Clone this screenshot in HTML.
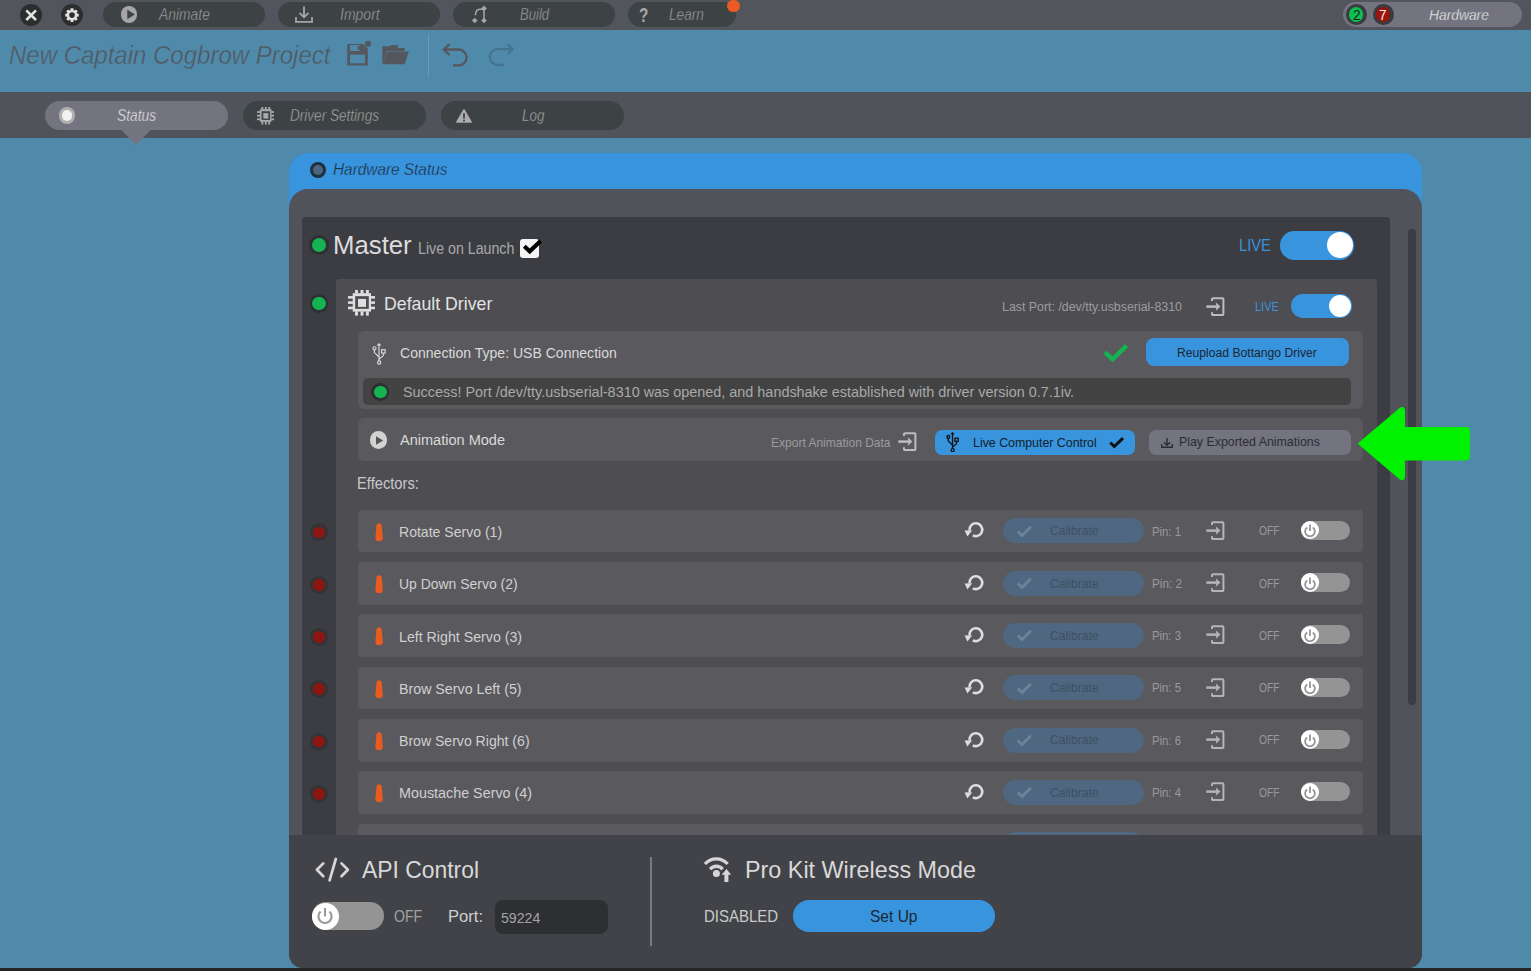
<!DOCTYPE html>
<html><head><meta charset="utf-8"><style>
html,body{margin:0;padding:0}
body{width:1531px;height:971px;overflow:hidden;position:relative;background:#508AAA;font-family:"Liberation Sans",sans-serif}
body>div,body>span{position:absolute}
.t{white-space:nowrap;transform-origin:0 0}
</style></head><body>
<div style="left:0px;top:0px;width:1531px;height:30px;background:#52565C;border-radius:0px;"></div>
<div style="left:20px;top:3.5px;width:22px;height:22px;background:#2C2D2F;border-radius:50%;"></div>
<svg style="position:absolute;left:20px;top:3.5px" width="22" height="22" viewBox="0 0 22 22"><path d="M6.3 6.3 L16 16 M16 6.3 L6.3 16" stroke="#E2E2E2" stroke-width="2.6" stroke-linecap="butt"/></svg>
<div style="left:61.3px;top:3.5px;width:22px;height:22px;background:#2C2D2F;border-radius:50%;"></div>
<svg style="position:absolute;left:61.3px;top:3.5px" width="22" height="22" viewBox="0 0 22 22"><path d="M15.94 9.49 L17.78 9.80 L17.78 12.40 L15.94 12.71 L15.64 13.46 L16.71 14.98 L14.88 16.81 L13.36 15.74 L12.61 16.04 L12.30 17.88 L9.70 17.88 L9.39 16.04 L8.64 15.74 L7.12 16.81 L5.29 14.98 L6.36 13.46 L6.06 12.71 L4.22 12.40 L4.22 9.80 L6.06 9.49 L6.36 8.74 L5.29 7.22 L7.12 5.39 L8.64 6.46 L9.39 6.16 L9.70 4.32 L12.30 4.32 L12.61 6.16 L13.36 6.46 L14.88 5.39 L16.71 7.22 L15.64 8.74Z" fill="#E2E2E2"/><circle cx="11" cy="11.1" r="2.8" fill="#2C2D2F"/></svg>
<div style="left:103px;top:2px;width:162px;height:25px;background:#3D4245;border-radius:12.5px;"></div>
<div style="left:120.8px;top:6.199999999999999px;width:16.6px;height:16.6px;background:#A6A6A6;border-radius:50%;"></div>
<svg style="position:absolute;left:121px;top:6px" width="17" height="17" viewBox="0 0 17 17"><path d="M6.3 3.6 L13.8 8.5 L6.3 13.3 Z" fill="#3D4245"/></svg>
<span class="t" style="transform:scaleX(0.8722);left:158.97px;top:7.00px;font-size:15.92px;line-height:15.92px;color:#9E9E9E;font-style:italic;-webkit-text-stroke:0.35px #3D4245;">Animate</span>
<div style="left:278px;top:2px;width:162px;height:25px;background:#3D4245;border-radius:12.5px;"></div>
<svg style="position:absolute;left:294px;top:4px" width="20" height="20" viewBox="0 0 20 20"><path d="M10 2.5 V13 M5.5 8.8 L10 13.2 L14.5 8.8" stroke="#A6A6A6" stroke-width="1.8" fill="none"/><path d="M2 13 V17.8 H18 V13" stroke="#A6A6A6" stroke-width="1.8" fill="none"/></svg>
<span class="t" style="transform:scaleX(0.8804);left:339.50px;top:7.00px;font-size:15.92px;line-height:15.92px;color:#9E9E9E;font-style:italic;-webkit-text-stroke:0.35px #3D4245;">Import</span>
<div style="left:453px;top:2px;width:162px;height:25px;background:#3D4245;border-radius:12.5px;"></div>
<svg style="position:absolute;left:470px;top:4px" width="20" height="20" viewBox="0 0 20 20"><path d="M14 5 V17" stroke="#A6A6A6" stroke-width="1.5" fill="none"/><path d="M14 5.3 H9.5 Q5.6 5.6 5.4 11.2" stroke="#A6A6A6" stroke-width="1.5" fill="none"/><path d="M14 1.6 L16.8 4.4 L14 7.2 L11.2 4.4Z" fill="#A6A6A6"/><path d="M14 13.7 L16.8 16.5 L14 19.3 L11.2 16.5Z" fill="#A6A6A6"/><path d="M4.7 13.7 L7.5 16.5 L4.7 19.3 L1.9 16.5Z" fill="#A6A6A6"/></svg>
<span class="t" style="transform:scaleX(0.8214);left:519.50px;top:7.00px;font-size:15.92px;line-height:15.92px;color:#9E9E9E;font-style:italic;-webkit-text-stroke:0.35px #3D4245;">Build</span>
<div style="left:628px;top:2px;width:108px;height:25px;background:#3D4245;border-radius:12.5px;"></div>
<span class="t" style="transform:scaleX(0.7417);left:638.90px;top:5.00px;font-size:20.64px;line-height:20.64px;color:#A6A6A6;font-weight:bold;">?</span>
<span class="t" style="transform:scaleX(0.8571);left:668.50px;top:7.00px;font-size:15.92px;line-height:15.92px;color:#9E9E9E;font-style:italic;-webkit-text-stroke:0.35px #3D4245;">Learn</span>
<div style="left:727.3px;top:-0.40000000000000036px;width:12.4px;height:12.4px;background:#EE5A24;border-radius:50%;"></div>
<div style="left:1342.5px;top:2px;width:179.5px;height:25px;background:#737480;border-radius:12.5px;"></div>
<div style="left:1345.5px;top:4.1px;width:21.0px;height:21.0px;background:#3A3B3E;border-radius:50%;"></div>
<div style="left:1348.6px;top:7.199999999999999px;width:14.8px;height:14.8px;background:#0EBE50;border-radius:50%;"></div>
<span class="t" style="transform:scaleX(0.9375);left:1352.50px;top:8.00px;font-size:14.68px;line-height:14.68px;color:#1A2A20;">2</span>
<div style="left:1372.5px;top:4.1px;width:21.0px;height:21.0px;background:#3A3B3E;border-radius:50%;"></div>
<div style="left:1375.6px;top:7.199999999999999px;width:14.8px;height:14.8px;background:#9E140B;border-radius:50%;"></div>
<span class="t" style="transform:scaleX(0.9250);left:1379.30px;top:8.00px;font-size:14.68px;line-height:14.68px;color:#EEEEEE;">7</span>
<span class="t" style="transform:scaleX(0.8970);left:1429.40px;top:7.00px;font-size:15.41px;line-height:15.41px;color:#EDEDED;font-style:italic;-webkit-text-stroke:0.3px #737480;">Hardware</span>
<span class="t" style="transform:scaleX(0.9279);left:9.40px;top:43.00px;font-size:25.87px;line-height:25.87px;color:#50575F;font-style:italic;-webkit-text-stroke:0.45px #508AAA;">New Captain Cogbrow Project</span>
<svg style="position:absolute;left:346px;top:40px" width="26" height="28" viewBox="0 0 26 28"><path d="M1.3 4 H17.5 L21.8 8.3 V25.6 H1.3 Z" fill="#54585E"/><rect x="4" y="5" width="10" height="6" fill="#508AAA"/><rect x="11.6" y="5.8" width="2.3" height="4.2" fill="#54585E"/><rect x="4" y="14.6" width="15" height="8.7" fill="#508AAA"/><circle cx="22" cy="3.8" r="3" fill="#54585E"/></svg>
<svg style="position:absolute;left:380px;top:42px" width="32" height="26" viewBox="0 0 32 26"><path d="M2.3 4.3 H10 L11 3 H17.7 V6 H24.7 V9 H7 L3 22 H2.3 Z" fill="#54585E"/><path d="M7.2 9.5 H28.8 L24.7 22.2 H3 Z" fill="#54585E"/></svg>
<div style="left:427.5px;top:34px;width:1.5px;height:42px;background:#6B9BB7;border-radius:0px;"></div>
<svg style="position:absolute;left:440px;top:40px" width="32" height="30" viewBox="0 0 32 30"><path d="M13 25.4 H18.5 A8 7.9 0 0 0 18.5 9.5 H4" stroke="#54585E" stroke-width="2.3" fill="none"/><path d="M9.5 4.2 L3.8 9.5 L9.5 15" stroke="#54585E" stroke-width="2.3" fill="none"/></svg>
<svg style="position:absolute;left:486px;top:40px" width="32" height="30" viewBox="0 0 32 30"><path d="M17.8 25 H11.8 A7.9 7.9 0 0 1 11.8 9.2 H26.2" stroke="#45748F" stroke-width="2.3" fill="none"/><path d="M21.8 4.4 L26.7 9.2 L21.8 14" stroke="#45748F" stroke-width="2.3" fill="none"/></svg>
<div style="left:0px;top:92px;width:1531px;height:46px;background:#505359;border-radius:0px;"></div>
<div style="left:45px;top:101px;width:183px;height:29px;background:#737480;border-radius:14.5px;"></div>
<svg style="position:absolute;left:118px;top:129px" width="36" height="17" viewBox="0 0 36 17"><path d="M2.5 0 H33.5 L18 16 Z" fill="#737480"/></svg>
<div style="left:58.89999999999999px;top:107.3px;width:16.4px;height:16.4px;background:#B0B0B0;border-radius:50%;"></div>
<div style="left:61.8px;top:110.2px;width:10.6px;height:10.6px;background:#F2F2F2;border-radius:50%;"></div>
<span class="t" style="transform:scaleX(0.8719);left:116.50px;top:108.00px;font-size:15.84px;line-height:15.84px;color:#EAEAEA;font-style:italic;-webkit-text-stroke:0.35px #737480;">Status</span>
<div style="left:243px;top:101px;width:183px;height:29px;background:#3D4245;border-radius:14.5px;"></div>
<svg style="position:absolute;left:257px;top:107.2px" width="17" height="17.7" viewBox="0 0 27 26" preserveAspectRatio="none"><rect x="4.7" y="3.2" width="18.3" height="18.6" fill="#ABABAB"/><rect x="7.2" y="6.2" width="13.6" height="12.8" fill="#3D4245"/><rect x="10" y="9" width="8" height="8" fill="#ABABAB"/><rect x="7.05" y="0" width="2.9" height="3.5" fill="#ABABAB"/><rect x="7.05" y="21.5" width="2.9" height="4.3" fill="#ABABAB"/><rect x="12.55" y="0" width="2.9" height="3.5" fill="#ABABAB"/><rect x="12.55" y="21.5" width="2.9" height="4.3" fill="#ABABAB"/><rect x="17.95" y="0" width="2.9" height="3.5" fill="#ABABAB"/><rect x="17.95" y="21.5" width="2.9" height="4.3" fill="#ABABAB"/><rect x="0" y="6.1000000000000005" width="5" height="2.6" fill="#ABABAB"/><rect x="22.7" y="6.1000000000000005" width="4.5" height="2.6" fill="#ABABAB"/><rect x="0" y="11.399999999999999" width="5" height="2.6" fill="#ABABAB"/><rect x="22.7" y="11.399999999999999" width="4.5" height="2.6" fill="#ABABAB"/><rect x="0" y="16.8" width="5" height="2.6" fill="#ABABAB"/><rect x="22.7" y="16.8" width="4.5" height="2.6" fill="#ABABAB"/></svg>
<span class="t" style="transform:scaleX(0.8648);left:289.90px;top:108.00px;font-size:15.70px;line-height:15.70px;color:#A6A6A6;font-style:italic;-webkit-text-stroke:0.35px #3D4245;">Driver Settings</span>
<div style="left:441px;top:101px;width:183px;height:29px;background:#3D4245;border-radius:14.5px;"></div>
<svg style="position:absolute;left:455px;top:107.5px" width="18" height="16" viewBox="0 0 18 16"><path d="M9 1.2 Q9.6 1.2 10 1.9 L16.8 13.8 Q17.1 14.8 16.2 14.8 H1.8 Q0.9 14.8 1.2 13.8 L8 1.9 Q8.4 1.2 9 1.2Z" fill="#ABABAB"/><rect x="8.1" y="5.3" width="1.8" height="5.2" fill="#3D4245"/><rect x="8.1" y="11.6" width="1.8" height="1.8" fill="#3D4245"/></svg>
<span class="t" style="transform:scaleX(0.8545);left:521.50px;top:108.00px;font-size:15.70px;line-height:15.70px;color:#A6A6A6;font-style:italic;-webkit-text-stroke:0.35px #3D4245;">Log</span>
<div style="left:289px;top:153px;width:1133px;height:107px;background:#3894DD;border-radius:20px 20px 0 0;"></div>
<div style="left:289px;top:189px;width:1133px;height:779px;background:#505359;border-radius:19px 19px 14px 14px;"></div>
<div style="left:310px;top:162.1px;width:16px;height:16px;background:#1F2F3E;border-radius:50%;"></div>
<div style="left:312.6px;top:164.7px;width:10.8px;height:10.8px;background:#4C6681;border-radius:50%;"></div>
<span class="t" style="transform:scaleX(0.9196);left:332.90px;top:162.00px;font-size:16.72px;line-height:16.72px;color:#1F3245;font-style:italic;-webkit-text-stroke:0.3px #3894DD;">Hardware Status</span>
<div style="left:302px;top:217px;width:1088px;height:683px;background:#3C3D42;border-radius:3px;"></div>
<div style="left:309px;top:234.8px;width:20px;height:20px;background:#2E2F33;border-radius:50%;"></div>
<div style="left:311.7px;top:237.5px;width:14.6px;height:14.6px;background:#14B452;border-radius:50%;"></div>
<span class="t" style="transform:scaleX(0.9843);left:332.53px;top:232.00px;font-size:26.16px;line-height:26.16px;color:#DCDCDC;">Master</span>
<span class="t" style="transform:scaleX(0.8889);left:417.91px;top:241.00px;font-size:15.99px;line-height:15.99px;color:#A9A9A9;">Live on Launch</span>
<div style="left:520.1px;top:239px;width:18.5px;height:19.100000000000023px;background:#F4F4F4;border-radius:3px;"></div>
<svg style="position:absolute;left:518px;top:236px" width="26" height="20" viewBox="0 0 26 20"><path d="M6.3 10.2 L11.7 15.3 L22.6 4.9" stroke="#000" stroke-width="4.1" fill="none" stroke-linejoin="miter"/></svg>
<span class="t" style="transform:scaleX(0.8724);left:1239.03px;top:238.00px;font-size:16.86px;line-height:16.86px;color:#3894DD;">LIVE</span>
<div style="left:1280px;top:231px;width:74px;height:28.5px;background:#3894DD;border-radius:14.25px;"></div>
<div style="left:1327px;top:232.3px;width:26px;height:26px;background:#FFFFFF;border-radius:50%;"></div>
<div style="left:335.7px;top:279px;width:1041.3px;height:621px;background:#4E4D52;border-radius:4px;"></div>
<div style="left:309.7px;top:294.2px;width:18.6px;height:18.6px;background:#2E2F33;border-radius:50%;"></div>
<div style="left:312.4px;top:296.9px;width:13.2px;height:13.2px;background:#14B452;border-radius:50%;"></div>
<svg style="position:absolute;left:348.1px;top:289.9px" width="27" height="25.8" viewBox="0 0 27 26" preserveAspectRatio="none"><rect x="4.7" y="3.2" width="18.3" height="18.6" fill="#DEDEDE"/><rect x="7.2" y="6.2" width="13.6" height="12.8" fill="#4E4D52"/><rect x="10" y="9" width="8" height="8" fill="#DEDEDE"/><rect x="7.05" y="0" width="2.9" height="3.5" fill="#DEDEDE"/><rect x="7.05" y="21.5" width="2.9" height="4.3" fill="#DEDEDE"/><rect x="12.55" y="0" width="2.9" height="3.5" fill="#DEDEDE"/><rect x="12.55" y="21.5" width="2.9" height="4.3" fill="#DEDEDE"/><rect x="17.95" y="0" width="2.9" height="3.5" fill="#DEDEDE"/><rect x="17.95" y="21.5" width="2.9" height="4.3" fill="#DEDEDE"/><rect x="0" y="6.1000000000000005" width="5" height="2.6" fill="#DEDEDE"/><rect x="22.7" y="6.1000000000000005" width="4.5" height="2.6" fill="#DEDEDE"/><rect x="0" y="11.399999999999999" width="5" height="2.6" fill="#DEDEDE"/><rect x="22.7" y="11.399999999999999" width="4.5" height="2.6" fill="#DEDEDE"/><rect x="0" y="16.8" width="5" height="2.6" fill="#DEDEDE"/><rect x="22.7" y="16.8" width="4.5" height="2.6" fill="#DEDEDE"/></svg>
<span class="t" style="transform:scaleX(0.9760);left:384.32px;top:295.00px;font-size:18.17px;line-height:18.17px;color:#E2E2E2;">Default Driver</span>
<span class="t" style="transform:scaleX(0.9059);left:1001.69px;top:300.00px;font-size:13.66px;line-height:13.66px;color:#9C9C9C;">Last Port: /dev/tty.usbserial-8310</span>
<svg style="position:absolute;left:1205.5px;top:297px" width="19.0" height="19.0" viewBox="0 0 19 19"><path d="M6 4.1 V2.3 Q6 1.3 7 1.3 H16.4 Q17.4 1.3 17.4 2.3 V17.1 Q17.4 18.1 16.4 18.1 H7 Q6 18.1 6 17.1 V15.2" stroke="#BDBDBD" stroke-width="2" fill="none"/><path d="M0.3 9.6 H11.5" stroke="#BDBDBD" stroke-width="2.5" fill="none"/><path d="M14.4 9.6 L9.7 5.3 L10.6 9.6 L9.7 13.9 Z" fill="#BDBDBD"/></svg>
<span class="t" style="transform:scaleX(0.8199);left:1255.18px;top:300.00px;font-size:13.37px;line-height:13.37px;color:#3894DD;">LIVE</span>
<div style="left:1291px;top:294.2px;width:61px;height:23.600000000000023px;background:#3894DD;border-radius:11.8px;"></div>
<div style="left:1328.7px;top:294.7px;width:22.6px;height:22.6px;background:#FFFFFF;border-radius:50%;"></div>
<div style="left:357.5px;top:331.3px;width:1005.5px;height:77.69999999999999px;background:#5A595E;border-radius:6px;"></div>
<svg style="position:absolute;left:371.5px;top:342.5px" width="14.0" height="22.0" viewBox="0 0 14 22"><g stroke="#DADADA" stroke-width="1.15" fill="none"><path d="M7 1.5 V17.8"/><path d="M2.4 6.9 V9.6 L7 14"/><path d="M11.3 10.2 V12.6 L7 16.2"/><circle cx="2.5" cy="5.3" r="1.55"/><rect x="9.6" y="6.7" width="3.5" height="3.4"/><circle cx="7.2" cy="19.5" r="1.6"/></g><path d="M7 0 L9.4 2.4 H4.6Z" fill="#DADADA"/></svg>
<span class="t" style="transform:scaleX(0.9471);left:399.70px;top:346.00px;font-size:14.83px;line-height:14.83px;color:#D9D9D9;">Connection Type: USB Connection</span>
<svg style="position:absolute;left:1101px;top:341px" width="30" height="24" viewBox="0 0 30 24"><path d="M4 11.3 L11.5 18.3 L25.6 4.6" stroke="#14B452" stroke-width="4.4" fill="none"/></svg>
<div style="left:1146px;top:337.6px;width:203px;height:28.599999999999966px;background:#3894DD;border-radius:8px;"></div>
<span class="t" style="transform:scaleX(0.9292);left:1176.57px;top:346.00px;font-size:13.08px;line-height:13.08px;color:#1C2733;">Reupload Bottango Driver</span>
<div style="left:363.4px;top:378px;width:987.6px;height:27px;background:#434344;border-radius:5px;"></div>
<div style="left:371.3px;top:383.2px;width:18px;height:18px;background:#2E2F33;border-radius:50%;"></div>
<div style="left:374.0px;top:385.9px;width:12.6px;height:12.6px;background:#14B452;border-radius:50%;"></div>
<span class="t" style="transform:scaleX(0.9712);left:403.00px;top:385.00px;font-size:14.83px;line-height:14.83px;color:#A9A9A9;">Success! Port /dev/tty.usbserial-8310 was opened, and handshake established with driver version 0.7.1iv.</span>
<div style="left:357.5px;top:418.3px;width:1005.5px;height:42.69999999999999px;background:#5A595E;border-radius:6px;"></div>
<div style="left:369.7px;top:431.3px;width:17.4px;height:17.4px;background:#D2D2D2;border-radius:50%;"></div>
<svg style="position:absolute;left:370px;top:431.5px" width="17" height="17" viewBox="0 0 17 17"><path d="M6 4.2 L13.2 8.5 L6 12.8 Z" fill="#55565B"/></svg>
<span class="t" style="transform:scaleX(0.9803);left:399.70px;top:433.00px;font-size:14.83px;line-height:14.83px;color:#D9D9D9;">Animation Mode</span>
<span class="t" style="transform:scaleX(0.9400);left:770.56px;top:437.00px;font-size:12.79px;line-height:12.79px;color:#9C9C9C;">Export Animation Data</span>
<svg style="position:absolute;left:897.8px;top:432px" width="19.0" height="19.0" viewBox="0 0 19 19"><path d="M6 4.1 V2.3 Q6 1.3 7 1.3 H16.4 Q17.4 1.3 17.4 2.3 V17.1 Q17.4 18.1 16.4 18.1 H7 Q6 18.1 6 17.1 V15.2" stroke="#BDBDBD" stroke-width="2" fill="none"/><path d="M0.3 9.6 H11.5" stroke="#BDBDBD" stroke-width="2.5" fill="none"/><path d="M14.4 9.6 L9.7 5.3 L10.6 9.6 L9.7 13.9 Z" fill="#BDBDBD"/></svg>
<div style="left:934.5px;top:429.7px;width:200.79999999999995px;height:25.30000000000001px;background:#3894DD;border-radius:7px;"></div>
<svg style="position:absolute;left:946px;top:432px" width="13.02" height="20.46" viewBox="0 0 14 22"><g stroke="#111111" stroke-width="1.4" fill="none"><path d="M7 1.5 V17.8"/><path d="M2.4 6.9 V9.6 L7 14"/><path d="M11.3 10.2 V12.6 L7 16.2"/><circle cx="2.5" cy="5.3" r="1.55"/><rect x="9.6" y="6.7" width="3.5" height="3.4"/><circle cx="7.2" cy="19.5" r="1.6"/></g><path d="M7 0 L9.4 2.4 H4.6Z" fill="#111111"/></svg>
<span class="t" style="transform:scaleX(0.9057);left:972.99px;top:436.00px;font-size:13.66px;line-height:13.66px;color:#14202C;">Live Computer Control</span>
<svg style="position:absolute;left:1108px;top:436px" width="18" height="14" viewBox="0 0 18 14"><path d="M2.3 6.5 L6.3 10.5 L15 2.2" stroke="#111" stroke-width="3" fill="none"/></svg>
<div style="left:1148.8px;top:430px;width:202.0px;height:25px;background:#737480;border-radius:7px;"></div>
<svg style="position:absolute;left:1160px;top:437px" width="14" height="12" viewBox="0 0 14 12"><path d="M7 1 V8.3 M4 5.3 L7 8.3 L10 5.3" stroke="#2A2B30" stroke-width="1.4" fill="none"/><path d="M1.7 7 V10.3 H12.3 V7" stroke="#2A2B30" stroke-width="1.4" fill="none"/></svg>
<span class="t" style="transform:scaleX(0.9552);left:1178.94px;top:436.00px;font-size:12.94px;line-height:12.94px;color:#2C2D33;">Play Exported Animations</span>
<span class="t" style="transform:scaleX(0.9200);left:357.48px;top:476.00px;font-size:15.99px;line-height:15.99px;color:#C9C9C9;">Effectors:</span>
<div style="left:357.5px;top:509.8px;width:1005.5px;height:42.69999999999999px;background:#5A595E;border-radius:4px;"></div>
<div style="left:310.3px;top:523.4px;width:18px;height:18px;background:#333438;border-radius:50%;"></div>
<div style="left:313.40000000000003px;top:526.5px;width:11.8px;height:11.8px;background:#8E1610;border-radius:50%;"></div>
<svg style="position:absolute;left:373.5px;top:521.8px" width="11" height="20" viewBox="0 0 11 20"><path d="M5.1 1.2 Q7.6 1.2 7.8 4 L8.4 11.5 Q8.8 13.8 8.8 16 Q8.8 19.2 5.1 19.2 Q1.4 19.2 1.4 16 Q1.4 13.8 1.8 11.5 L2.4 4 Q2.6 1.2 5.1 1.2Z" fill="#E95C20"/></svg>
<span class="t" style="transform:scaleX(0.9036);left:398.60px;top:524.00px;font-size:15.55px;line-height:15.55px;color:#D0D0D0;">Rotate Servo (1)</span>
<svg style="position:absolute;left:963px;top:520.3px" width="22" height="20" viewBox="0 0 22 20"><path d="M6.5 10.3 A6.4 6.4 0 1 1 9.8 15.3" stroke="#DDDDDD" stroke-width="2.6" fill="none"/><path d="M1.6 10.6 L9.2 10.2 L4.4 16.4Z" fill="#DDDDDD"/></svg>
<div style="left:1003.2px;top:518.3px;width:140.79999999999995px;height:25.100000000000023px;background:#4F6780;border-radius:12.5px;"></div>
<svg style="position:absolute;left:1015px;top:523.8px" width="20" height="15" viewBox="0 0 20 15"><path d="M2.8 7.5 L7 11.6 L15.8 2.8" stroke="#6E8398" stroke-width="2.8" fill="none"/></svg>
<span class="t" style="transform:scaleX(0.9089);left:1049.80px;top:524.00px;font-size:13.37px;line-height:13.37px;color:#3F5165;">Calibrate</span>
<span class="t" style="transform:scaleX(0.9061);left:1151.99px;top:526.00px;font-size:12.50px;line-height:12.50px;color:#9A9A9A;">Pin: 1</span>
<svg style="position:absolute;left:1205.5px;top:520.8px" width="19.0" height="19.0" viewBox="0 0 19 19"><path d="M6 4.1 V2.3 Q6 1.3 7 1.3 H16.4 Q17.4 1.3 17.4 2.3 V17.1 Q17.4 18.1 16.4 18.1 H7 Q6 18.1 6 17.1 V15.2" stroke="#B5B5B5" stroke-width="2" fill="none"/><path d="M0.3 9.6 H11.5" stroke="#B5B5B5" stroke-width="2.5" fill="none"/><path d="M14.4 9.6 L9.7 5.3 L10.6 9.6 L9.7 13.9 Z" fill="#B5B5B5"/></svg>
<span class="t" style="transform:scaleX(0.8202);left:1258.70px;top:525.00px;font-size:12.50px;line-height:12.50px;color:#9A9A9A;">OFF</span>
<div style="left:1300.7px;top:520.8px;width:49.299999999999955px;height:19.100000000000023px;background:#949494;border-radius:9.6px;"></div>
<div style="left:1300.7px;top:521.0999999999999px;width:18.4px;height:18.4px;background:#FFFFFF;border-radius:50%;"></div>
<svg style="position:absolute;left:1302px;top:522.3px" width="16" height="16" viewBox="0 0 16 16"><path d="M5.2 5.4 A4.9 4.9 0 1 0 10.8 5.4" stroke="#959595" stroke-width="1.8" fill="none"/><path d="M8 2.6 V9" stroke="#959595" stroke-width="1.8"/></svg>
<div style="left:357.5px;top:562.1px;width:1005.5px;height:42.69999999999993px;background:#5A595E;border-radius:4px;"></div>
<div style="left:310.3px;top:575.7px;width:18px;height:18px;background:#333438;border-radius:50%;"></div>
<div style="left:313.40000000000003px;top:578.8000000000001px;width:11.8px;height:11.8px;background:#8E1610;border-radius:50%;"></div>
<svg style="position:absolute;left:373.5px;top:574.1px" width="11" height="20" viewBox="0 0 11 20"><path d="M5.1 1.2 Q7.6 1.2 7.8 4 L8.4 11.5 Q8.8 13.8 8.8 16 Q8.8 19.2 5.1 19.2 Q1.4 19.2 1.4 16 Q1.4 13.8 1.8 11.5 L2.4 4 Q2.6 1.2 5.1 1.2Z" fill="#E95C20"/></svg>
<span class="t" style="transform:scaleX(0.8968);left:398.60px;top:576.00px;font-size:15.55px;line-height:15.55px;color:#D0D0D0;">Up Down Servo (2)</span>
<svg style="position:absolute;left:963px;top:572.6px" width="22" height="20" viewBox="0 0 22 20"><path d="M6.5 10.3 A6.4 6.4 0 1 1 9.8 15.3" stroke="#DDDDDD" stroke-width="2.6" fill="none"/><path d="M1.6 10.6 L9.2 10.2 L4.4 16.4Z" fill="#DDDDDD"/></svg>
<div style="left:1003.2px;top:570.6px;width:140.79999999999995px;height:25.100000000000023px;background:#4F6780;border-radius:12.5px;"></div>
<svg style="position:absolute;left:1015px;top:576.1px" width="20" height="15" viewBox="0 0 20 15"><path d="M2.8 7.5 L7 11.6 L15.8 2.8" stroke="#6E8398" stroke-width="2.8" fill="none"/></svg>
<span class="t" style="transform:scaleX(0.9089);left:1049.80px;top:577.00px;font-size:13.37px;line-height:13.37px;color:#3F5165;">Calibrate</span>
<span class="t" style="transform:scaleX(0.9383);left:1151.96px;top:578.00px;font-size:12.50px;line-height:12.50px;color:#9A9A9A;">Pin: 2</span>
<svg style="position:absolute;left:1205.5px;top:573.1px" width="19.0" height="19.0" viewBox="0 0 19 19"><path d="M6 4.1 V2.3 Q6 1.3 7 1.3 H16.4 Q17.4 1.3 17.4 2.3 V17.1 Q17.4 18.1 16.4 18.1 H7 Q6 18.1 6 17.1 V15.2" stroke="#B5B5B5" stroke-width="2" fill="none"/><path d="M0.3 9.6 H11.5" stroke="#B5B5B5" stroke-width="2.5" fill="none"/><path d="M14.4 9.6 L9.7 5.3 L10.6 9.6 L9.7 13.9 Z" fill="#B5B5B5"/></svg>
<span class="t" style="transform:scaleX(0.8202);left:1258.70px;top:578.00px;font-size:12.50px;line-height:12.50px;color:#9A9A9A;">OFF</span>
<div style="left:1300.7px;top:573.1px;width:49.299999999999955px;height:19.100000000000023px;background:#949494;border-radius:9.6px;"></div>
<div style="left:1300.7px;top:573.4px;width:18.4px;height:18.4px;background:#FFFFFF;border-radius:50%;"></div>
<svg style="position:absolute;left:1302px;top:574.6px" width="16" height="16" viewBox="0 0 16 16"><path d="M5.2 5.4 A4.9 4.9 0 1 0 10.8 5.4" stroke="#959595" stroke-width="1.8" fill="none"/><path d="M8 2.6 V9" stroke="#959595" stroke-width="1.8"/></svg>
<div style="left:357.5px;top:614.4px;width:1005.5px;height:42.700000000000045px;background:#5A595E;border-radius:4px;"></div>
<div style="left:310.3px;top:628.0px;width:18px;height:18px;background:#333438;border-radius:50%;"></div>
<div style="left:313.40000000000003px;top:631.1px;width:11.8px;height:11.8px;background:#8E1610;border-radius:50%;"></div>
<svg style="position:absolute;left:373.5px;top:626.4px" width="11" height="20" viewBox="0 0 11 20"><path d="M5.1 1.2 Q7.6 1.2 7.8 4 L8.4 11.5 Q8.8 13.8 8.8 16 Q8.8 19.2 5.1 19.2 Q1.4 19.2 1.4 16 Q1.4 13.8 1.8 11.5 L2.4 4 Q2.6 1.2 5.1 1.2Z" fill="#E95C20"/></svg>
<span class="t" style="transform:scaleX(0.9130);left:398.59px;top:629.00px;font-size:15.55px;line-height:15.55px;color:#D0D0D0;">Left Right Servo (3)</span>
<svg style="position:absolute;left:963px;top:624.9px" width="22" height="20" viewBox="0 0 22 20"><path d="M6.5 10.3 A6.4 6.4 0 1 1 9.8 15.3" stroke="#DDDDDD" stroke-width="2.6" fill="none"/><path d="M1.6 10.6 L9.2 10.2 L4.4 16.4Z" fill="#DDDDDD"/></svg>
<div style="left:1003.2px;top:622.9px;width:140.79999999999995px;height:25.100000000000023px;background:#4F6780;border-radius:12.5px;"></div>
<svg style="position:absolute;left:1015px;top:628.4px" width="20" height="15" viewBox="0 0 20 15"><path d="M2.8 7.5 L7 11.6 L15.8 2.8" stroke="#6E8398" stroke-width="2.8" fill="none"/></svg>
<span class="t" style="transform:scaleX(0.9089);left:1049.80px;top:629.00px;font-size:13.37px;line-height:13.37px;color:#3F5165;">Calibrate</span>
<span class="t" style="transform:scaleX(0.9061);left:1151.99px;top:630.00px;font-size:12.50px;line-height:12.50px;color:#9A9A9A;">Pin: 3</span>
<svg style="position:absolute;left:1205.5px;top:625.4px" width="19.0" height="19.0" viewBox="0 0 19 19"><path d="M6 4.1 V2.3 Q6 1.3 7 1.3 H16.4 Q17.4 1.3 17.4 2.3 V17.1 Q17.4 18.1 16.4 18.1 H7 Q6 18.1 6 17.1 V15.2" stroke="#B5B5B5" stroke-width="2" fill="none"/><path d="M0.3 9.6 H11.5" stroke="#B5B5B5" stroke-width="2.5" fill="none"/><path d="M14.4 9.6 L9.7 5.3 L10.6 9.6 L9.7 13.9 Z" fill="#B5B5B5"/></svg>
<span class="t" style="transform:scaleX(0.8202);left:1258.70px;top:630.00px;font-size:12.50px;line-height:12.50px;color:#9A9A9A;">OFF</span>
<div style="left:1300.7px;top:625.4px;width:49.299999999999955px;height:19.100000000000023px;background:#949494;border-radius:9.6px;"></div>
<div style="left:1300.7px;top:625.6999999999999px;width:18.4px;height:18.4px;background:#FFFFFF;border-radius:50%;"></div>
<svg style="position:absolute;left:1302px;top:626.9px" width="16" height="16" viewBox="0 0 16 16"><path d="M5.2 5.4 A4.9 4.9 0 1 0 10.8 5.4" stroke="#959595" stroke-width="1.8" fill="none"/><path d="M8 2.6 V9" stroke="#959595" stroke-width="1.8"/></svg>
<div style="left:357.5px;top:666.7px;width:1005.5px;height:42.69999999999993px;background:#5A595E;border-radius:4px;"></div>
<div style="left:310.3px;top:680.3px;width:18px;height:18px;background:#333438;border-radius:50%;"></div>
<div style="left:313.40000000000003px;top:683.4px;width:11.8px;height:11.8px;background:#8E1610;border-radius:50%;"></div>
<svg style="position:absolute;left:373.5px;top:678.7px" width="11" height="20" viewBox="0 0 11 20"><path d="M5.1 1.2 Q7.6 1.2 7.8 4 L8.4 11.5 Q8.8 13.8 8.8 16 Q8.8 19.2 5.1 19.2 Q1.4 19.2 1.4 16 Q1.4 13.8 1.8 11.5 L2.4 4 Q2.6 1.2 5.1 1.2Z" fill="#E95C20"/></svg>
<span class="t" style="transform:scaleX(0.9153);left:398.58px;top:681.00px;font-size:15.55px;line-height:15.55px;color:#D0D0D0;">Brow Servo Left (5)</span>
<svg style="position:absolute;left:963px;top:677.2px" width="22" height="20" viewBox="0 0 22 20"><path d="M6.5 10.3 A6.4 6.4 0 1 1 9.8 15.3" stroke="#DDDDDD" stroke-width="2.6" fill="none"/><path d="M1.6 10.6 L9.2 10.2 L4.4 16.4Z" fill="#DDDDDD"/></svg>
<div style="left:1003.2px;top:675.2px;width:140.79999999999995px;height:25.09999999999991px;background:#4F6780;border-radius:12.5px;"></div>
<svg style="position:absolute;left:1015px;top:680.7px" width="20" height="15" viewBox="0 0 20 15"><path d="M2.8 7.5 L7 11.6 L15.8 2.8" stroke="#6E8398" stroke-width="2.8" fill="none"/></svg>
<span class="t" style="transform:scaleX(0.9089);left:1049.80px;top:681.00px;font-size:13.37px;line-height:13.37px;color:#3F5165;">Calibrate</span>
<span class="t" style="transform:scaleX(0.9061);left:1151.99px;top:682.00px;font-size:12.50px;line-height:12.50px;color:#9A9A9A;">Pin: 5</span>
<svg style="position:absolute;left:1205.5px;top:677.7px" width="19.0" height="19.0" viewBox="0 0 19 19"><path d="M6 4.1 V2.3 Q6 1.3 7 1.3 H16.4 Q17.4 1.3 17.4 2.3 V17.1 Q17.4 18.1 16.4 18.1 H7 Q6 18.1 6 17.1 V15.2" stroke="#B5B5B5" stroke-width="2" fill="none"/><path d="M0.3 9.6 H11.5" stroke="#B5B5B5" stroke-width="2.5" fill="none"/><path d="M14.4 9.6 L9.7 5.3 L10.6 9.6 L9.7 13.9 Z" fill="#B5B5B5"/></svg>
<span class="t" style="transform:scaleX(0.8202);left:1258.70px;top:682.00px;font-size:12.50px;line-height:12.50px;color:#9A9A9A;">OFF</span>
<div style="left:1300.7px;top:677.7px;width:49.299999999999955px;height:19.09999999999991px;background:#949494;border-radius:9.6px;"></div>
<div style="left:1300.7px;top:678.0px;width:18.4px;height:18.4px;background:#FFFFFF;border-radius:50%;"></div>
<svg style="position:absolute;left:1302px;top:679.2px" width="16" height="16" viewBox="0 0 16 16"><path d="M5.2 5.4 A4.9 4.9 0 1 0 10.8 5.4" stroke="#959595" stroke-width="1.8" fill="none"/><path d="M8 2.6 V9" stroke="#959595" stroke-width="1.8"/></svg>
<div style="left:357.5px;top:719.0px;width:1005.5px;height:42.700000000000045px;background:#5A595E;border-radius:4px;"></div>
<div style="left:310.3px;top:732.6px;width:18px;height:18px;background:#333438;border-radius:50%;"></div>
<div style="left:313.40000000000003px;top:735.7px;width:11.8px;height:11.8px;background:#8E1610;border-radius:50%;"></div>
<svg style="position:absolute;left:373.5px;top:731.0px" width="11" height="20" viewBox="0 0 11 20"><path d="M5.1 1.2 Q7.6 1.2 7.8 4 L8.4 11.5 Q8.8 13.8 8.8 16 Q8.8 19.2 5.1 19.2 Q1.4 19.2 1.4 16 Q1.4 13.8 1.8 11.5 L2.4 4 Q2.6 1.2 5.1 1.2Z" fill="#E95C20"/></svg>
<span class="t" style="transform:scaleX(0.9049);left:398.60px;top:733.00px;font-size:15.55px;line-height:15.55px;color:#D0D0D0;">Brow Servo Right (6)</span>
<svg style="position:absolute;left:963px;top:729.5px" width="22" height="20" viewBox="0 0 22 20"><path d="M6.5 10.3 A6.4 6.4 0 1 1 9.8 15.3" stroke="#DDDDDD" stroke-width="2.6" fill="none"/><path d="M1.6 10.6 L9.2 10.2 L4.4 16.4Z" fill="#DDDDDD"/></svg>
<div style="left:1003.2px;top:727.5px;width:140.79999999999995px;height:25.100000000000023px;background:#4F6780;border-radius:12.5px;"></div>
<svg style="position:absolute;left:1015px;top:733.0px" width="20" height="15" viewBox="0 0 20 15"><path d="M2.8 7.5 L7 11.6 L15.8 2.8" stroke="#6E8398" stroke-width="2.8" fill="none"/></svg>
<span class="t" style="transform:scaleX(0.9089);left:1049.80px;top:733.00px;font-size:13.37px;line-height:13.37px;color:#3F5165;">Calibrate</span>
<span class="t" style="transform:scaleX(0.9061);left:1151.99px;top:735.00px;font-size:12.50px;line-height:12.50px;color:#9A9A9A;">Pin: 6</span>
<svg style="position:absolute;left:1205.5px;top:730.0px" width="19.0" height="19.0" viewBox="0 0 19 19"><path d="M6 4.1 V2.3 Q6 1.3 7 1.3 H16.4 Q17.4 1.3 17.4 2.3 V17.1 Q17.4 18.1 16.4 18.1 H7 Q6 18.1 6 17.1 V15.2" stroke="#B5B5B5" stroke-width="2" fill="none"/><path d="M0.3 9.6 H11.5" stroke="#B5B5B5" stroke-width="2.5" fill="none"/><path d="M14.4 9.6 L9.7 5.3 L10.6 9.6 L9.7 13.9 Z" fill="#B5B5B5"/></svg>
<span class="t" style="transform:scaleX(0.8202);left:1258.70px;top:734.00px;font-size:12.50px;line-height:12.50px;color:#9A9A9A;">OFF</span>
<div style="left:1300.7px;top:730.0px;width:49.299999999999955px;height:19.100000000000023px;background:#949494;border-radius:9.6px;"></div>
<div style="left:1300.7px;top:730.3px;width:18.4px;height:18.4px;background:#FFFFFF;border-radius:50%;"></div>
<svg style="position:absolute;left:1302px;top:731.5px" width="16" height="16" viewBox="0 0 16 16"><path d="M5.2 5.4 A4.9 4.9 0 1 0 10.8 5.4" stroke="#959595" stroke-width="1.8" fill="none"/><path d="M8 2.6 V9" stroke="#959595" stroke-width="1.8"/></svg>
<div style="left:357.5px;top:771.3px;width:1005.5px;height:42.700000000000045px;background:#5A595E;border-radius:4px;"></div>
<div style="left:310.3px;top:784.9px;width:18px;height:18px;background:#333438;border-radius:50%;"></div>
<div style="left:313.40000000000003px;top:788.0px;width:11.8px;height:11.8px;background:#8E1610;border-radius:50%;"></div>
<svg style="position:absolute;left:373.5px;top:783.3px" width="11" height="20" viewBox="0 0 11 20"><path d="M5.1 1.2 Q7.6 1.2 7.8 4 L8.4 11.5 Q8.8 13.8 8.8 16 Q8.8 19.2 5.1 19.2 Q1.4 19.2 1.4 16 Q1.4 13.8 1.8 11.5 L2.4 4 Q2.6 1.2 5.1 1.2Z" fill="#E95C20"/></svg>
<span class="t" style="transform:scaleX(0.9223);left:398.58px;top:785.00px;font-size:15.55px;line-height:15.55px;color:#D0D0D0;">Moustache Servo (4)</span>
<svg style="position:absolute;left:963px;top:781.8px" width="22" height="20" viewBox="0 0 22 20"><path d="M6.5 10.3 A6.4 6.4 0 1 1 9.8 15.3" stroke="#DDDDDD" stroke-width="2.6" fill="none"/><path d="M1.6 10.6 L9.2 10.2 L4.4 16.4Z" fill="#DDDDDD"/></svg>
<div style="left:1003.2px;top:779.8px;width:140.79999999999995px;height:25.100000000000023px;background:#4F6780;border-radius:12.5px;"></div>
<svg style="position:absolute;left:1015px;top:785.3px" width="20" height="15" viewBox="0 0 20 15"><path d="M2.8 7.5 L7 11.6 L15.8 2.8" stroke="#6E8398" stroke-width="2.8" fill="none"/></svg>
<span class="t" style="transform:scaleX(0.9089);left:1049.80px;top:786.00px;font-size:13.37px;line-height:13.37px;color:#3F5165;">Calibrate</span>
<span class="t" style="transform:scaleX(0.9061);left:1151.99px;top:787.00px;font-size:12.50px;line-height:12.50px;color:#9A9A9A;">Pin: 4</span>
<svg style="position:absolute;left:1205.5px;top:782.3px" width="19.0" height="19.0" viewBox="0 0 19 19"><path d="M6 4.1 V2.3 Q6 1.3 7 1.3 H16.4 Q17.4 1.3 17.4 2.3 V17.1 Q17.4 18.1 16.4 18.1 H7 Q6 18.1 6 17.1 V15.2" stroke="#B5B5B5" stroke-width="2" fill="none"/><path d="M0.3 9.6 H11.5" stroke="#B5B5B5" stroke-width="2.5" fill="none"/><path d="M14.4 9.6 L9.7 5.3 L10.6 9.6 L9.7 13.9 Z" fill="#B5B5B5"/></svg>
<span class="t" style="transform:scaleX(0.8202);left:1258.70px;top:787.00px;font-size:12.50px;line-height:12.50px;color:#9A9A9A;">OFF</span>
<div style="left:1300.7px;top:782.3px;width:49.299999999999955px;height:19.100000000000023px;background:#949494;border-radius:9.6px;"></div>
<div style="left:1300.7px;top:782.5999999999999px;width:18.4px;height:18.4px;background:#FFFFFF;border-radius:50%;"></div>
<svg style="position:absolute;left:1302px;top:783.8px" width="16" height="16" viewBox="0 0 16 16"><path d="M5.2 5.4 A4.9 4.9 0 1 0 10.8 5.4" stroke="#959595" stroke-width="1.8" fill="none"/><path d="M8 2.6 V9" stroke="#959595" stroke-width="1.8"/></svg>
<div style="left:357.5px;top:823.6px;width:1005.5px;height:42.69999999999993px;background:#5A595E;border-radius:4px;"></div>
<div style="left:310.3px;top:837.2px;width:18px;height:18px;background:#333438;border-radius:50%;"></div>
<div style="left:313.40000000000003px;top:840.3000000000001px;width:11.8px;height:11.8px;background:#8E1610;border-radius:50%;"></div>
<svg style="position:absolute;left:373.5px;top:835.6px" width="11" height="20" viewBox="0 0 11 20"><path d="M5.1 1.2 Q7.6 1.2 7.8 4 L8.4 11.5 Q8.8 13.8 8.8 16 Q8.8 19.2 5.1 19.2 Q1.4 19.2 1.4 16 Q1.4 13.8 1.8 11.5 L2.4 4 Q2.6 1.2 5.1 1.2Z" fill="#E95C20"/></svg>
<svg style="position:absolute;left:963px;top:834.1px" width="22" height="20" viewBox="0 0 22 20"><path d="M6.5 10.3 A6.4 6.4 0 1 1 9.8 15.3" stroke="#DDDDDD" stroke-width="2.6" fill="none"/><path d="M1.6 10.6 L9.2 10.2 L4.4 16.4Z" fill="#DDDDDD"/></svg>
<div style="left:1003.2px;top:832.1px;width:140.79999999999995px;height:25.100000000000023px;background:#4F6780;border-radius:12.5px;"></div>
<svg style="position:absolute;left:1015px;top:837.6px" width="20" height="15" viewBox="0 0 20 15"><path d="M2.8 7.5 L7 11.6 L15.8 2.8" stroke="#6E8398" stroke-width="2.8" fill="none"/></svg>
<span class="t" style="transform:scaleX(0.9089);left:1049.80px;top:838.00px;font-size:13.37px;line-height:13.37px;color:#3F5165;">Calibrate</span>
<svg style="position:absolute;left:1205.5px;top:834.6px" width="19.0" height="19.0" viewBox="0 0 19 19"><path d="M6 4.1 V2.3 Q6 1.3 7 1.3 H16.4 Q17.4 1.3 17.4 2.3 V17.1 Q17.4 18.1 16.4 18.1 H7 Q6 18.1 6 17.1 V15.2" stroke="#B5B5B5" stroke-width="2" fill="none"/><path d="M0.3 9.6 H11.5" stroke="#B5B5B5" stroke-width="2.5" fill="none"/><path d="M14.4 9.6 L9.7 5.3 L10.6 9.6 L9.7 13.9 Z" fill="#B5B5B5"/></svg>
<span class="t" style="transform:scaleX(0.8202);left:1258.70px;top:839.00px;font-size:12.50px;line-height:12.50px;color:#9A9A9A;">OFF</span>
<div style="left:1300.7px;top:834.6px;width:49.299999999999955px;height:19.100000000000023px;background:#949494;border-radius:9.6px;"></div>
<div style="left:1300.7px;top:834.9px;width:18.4px;height:18.4px;background:#FFFFFF;border-radius:50%;"></div>
<svg style="position:absolute;left:1302px;top:836.1px" width="16" height="16" viewBox="0 0 16 16"><path d="M5.2 5.4 A4.9 4.9 0 1 0 10.8 5.4" stroke="#959595" stroke-width="1.8" fill="none"/><path d="M8 2.6 V9" stroke="#959595" stroke-width="1.8"/></svg>
<div style="left:1408px;top:229px;width:8px;height:475.5px;background:#3C3D42;border-radius:4px;"></div>
<div style="left:289px;top:835px;width:1133px;height:133px;background:#424348;border-radius:0 0 14px 14px;"></div>
<svg style="position:absolute;left:313px;top:856px" width="40" height="28" viewBox="0 0 40 28"><g stroke="#D6D6D6" stroke-width="2.7" fill="none" stroke-linecap="round" stroke-linejoin="round"><path d="M10.3 7.4 L3.9 13.8 L10.3 20.2"/><path d="M28.5 7.4 L34.9 13.8 L28.5 20.2"/><path d="M22.8 3 L16.6 24.4"/></g></svg>
<span class="t" style="transform:scaleX(0.9846);left:361.60px;top:859.00px;font-size:23.26px;line-height:23.26px;color:#D9D9D9;">API Control</span>
<div style="left:311.8px;top:902.3px;width:72.39999999999998px;height:28.200000000000045px;background:#949494;border-radius:14.1px;"></div>
<div style="left:312.0px;top:903.0px;width:26.8px;height:26.8px;background:#FFFFFF;border-radius:50%;"></div>
<svg style="position:absolute;left:313.4px;top:904.4px" width="24" height="24" viewBox="0 0 24 24"><path d="M7.6 7.5 A6.6 6.6 0 1 0 16.4 7.5" stroke="#9A9A9A" stroke-width="2.2" fill="none"/><path d="M12 4 V12.4" stroke="#9A9A9A" stroke-width="2.2"/></svg>
<span class="t" style="transform:scaleX(0.8224);left:394.00px;top:908.00px;font-size:17.15px;line-height:17.15px;color:#A3A3A3;">OFF</span>
<span class="t" style="transform:scaleX(1.0007);left:448.30px;top:909.00px;font-size:16.57px;line-height:16.57px;color:#CFCFCF;">Port:</span>
<div style="left:495px;top:900px;width:113px;height:33.60000000000002px;background:#2E2F33;border-radius:8px;"></div>
<span class="t" style="transform:scaleX(0.9754);left:501.00px;top:911.00px;font-size:14.53px;line-height:14.53px;color:#A3A3A3;">59224</span>
<div style="left:649.8px;top:857px;width:2.0px;height:88.79999999999995px;background:#7A7B80;border-radius:0px;"></div>
<svg style="position:absolute;left:700px;top:853px" width="34" height="32" viewBox="0 0 34 32"><path d="M5 11 A15.1 15.1 0 0 1 27.6 11" stroke="#D6D6D6" stroke-width="3.3" fill="none"/><path d="M10.2 16.3 A7.8 7.8 0 0 1 22.6 16.3" stroke="#D6D6D6" stroke-width="3.3" fill="none"/><circle cx="16.4" cy="20.6" r="3.5" fill="#D6D6D6"/><path d="M24.4 29 V21" stroke="#D6D6D6" stroke-width="4" transform="translate(2,0)"/><path d="M21.6 21.8 L26.5 16 L31.2 21.8Z" fill="#D6D6D6"/></svg>
<span class="t" style="transform:scaleX(1.0042);left:744.70px;top:859.00px;font-size:23.26px;line-height:23.26px;color:#D9D9D9;">Pro Kit Wireless Mode</span>
<span class="t" style="transform:scaleX(0.8741);left:703.83px;top:908.00px;font-size:17.15px;line-height:17.15px;color:#CACACA;">DISABLED</span>
<div style="left:792.7px;top:899.7px;width:202.29999999999995px;height:32.0px;background:#3894DD;border-radius:16px;"></div>
<span class="t" style="transform:scaleX(0.9061);left:870.00px;top:908.00px;font-size:17.15px;line-height:17.15px;color:#1C2733;">Set Up</span>
<div style="left:0px;top:968px;width:1531px;height:3px;background:#262628;border-radius:0px;"></div>
<svg style="position:absolute;left:1350px;top:400px" width="125" height="86" viewBox="0 0 125 86"><path d="M9.8 43.6 L50.2 9.4 Q53.5 6.9 53.5 11 V28.6 H115.6 Q118.5 28.6 118.5 31.5 V56 Q118.5 58.9 115.6 58.9 H53.5 V76.2 Q53.5 80.3 50.2 77.8 Z" fill="#00F200" stroke="#00F200" stroke-width="3" stroke-linejoin="round"/></svg>
</body></html>
